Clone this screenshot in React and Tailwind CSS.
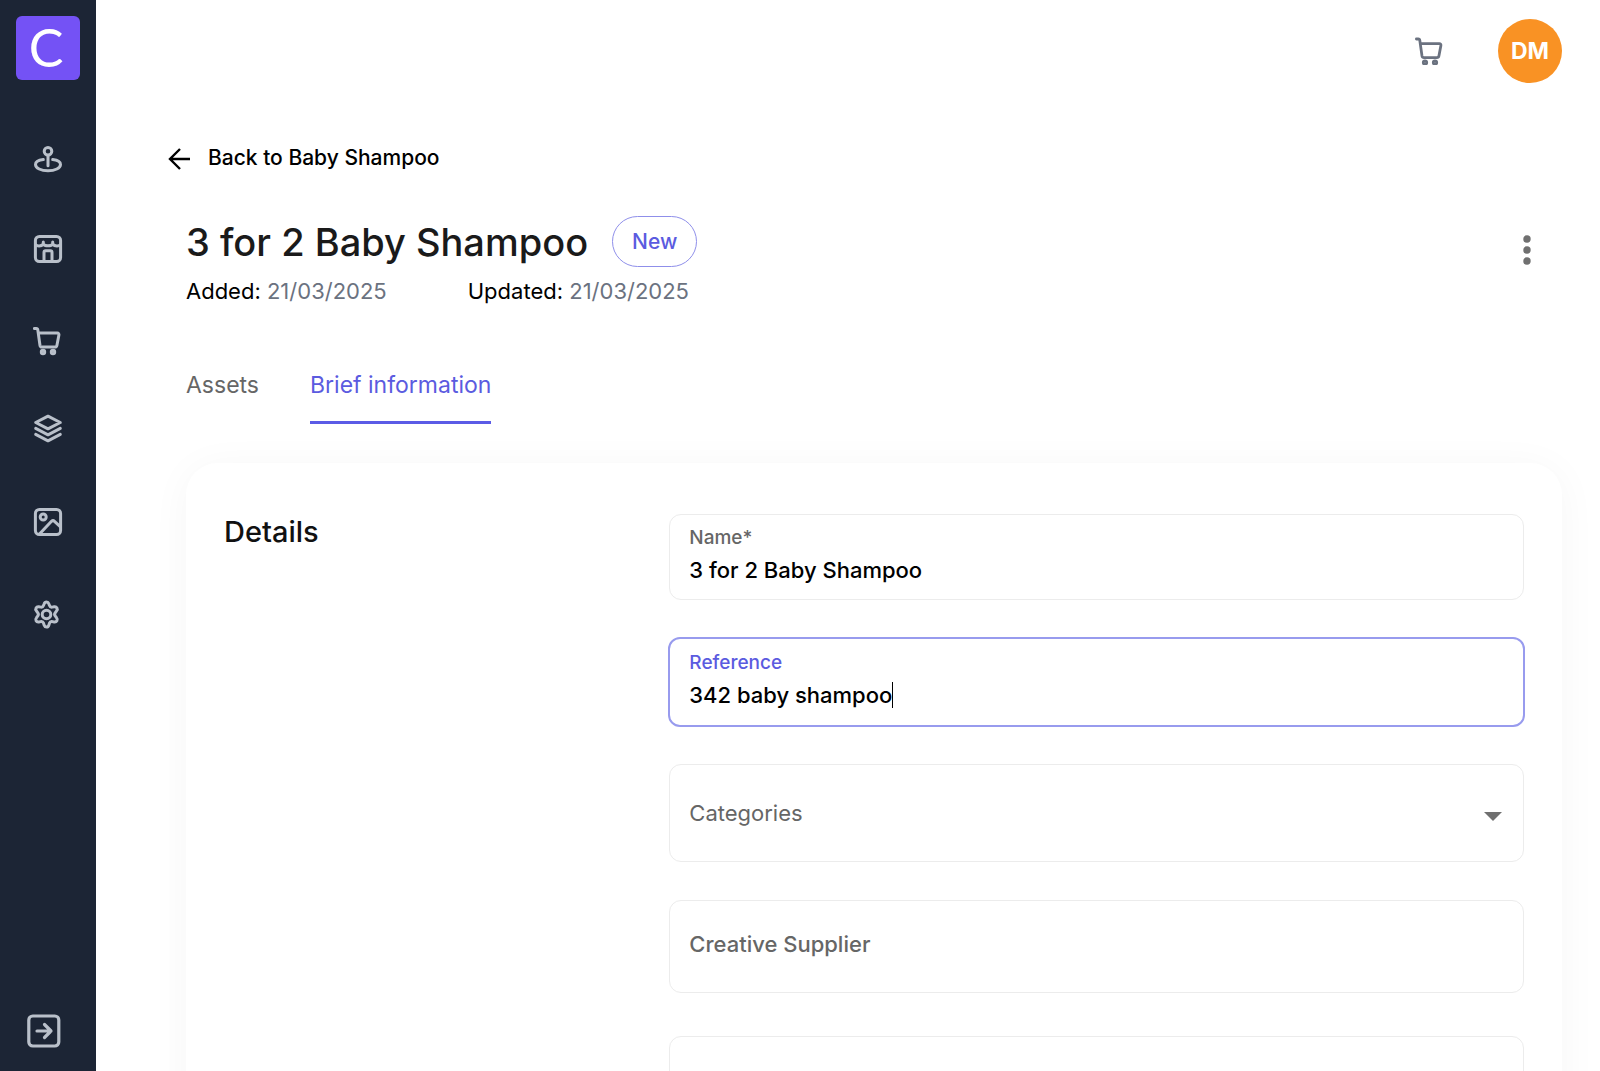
const navIcons = [
  {
    label: "Locations",
    viewBox: "-1 -5.5 30 40",
    shape: (
      <>
        <circle cx="14" cy="5.800" r="3.800" />
        <path d="M14 10v10.3M9.300 14.1C4.600 14.700 1.500 16.500 1.500 19c0 3.600 5.600 6.300 12.500 6.300s12.500-2.700 12.500-6.300c0-2.500-3.100-4.300-7.800-4.900" />
      </>
    ),
  },
  {
    label: "Stores",
    viewBox: "-1 -4 30 40",
    shape: (
      <>
        <rect x="1.400" y="1.400" width="25.200" height="25.200" rx="4" />
        <path d="M1.600 9.700c1.600 1.600 5.400 1.800 7.700-.6 1.400 2.300 8 2.300 9.400 0 2.300 2.400 6.100 2.200 7.700.6M9.300 9.100V7M18.700 9.100V7M10 26v-8.600a1.600 1.600 0 0 1 1.600-1.600h4.800a1.600 1.600 0 0 1 1.600 1.600V26" />
      </>
    ),
  },
  {
    label: "Orders",
    viewBox: "0 -4.500 30 40",
    shape: <CartShape />,
  },
  {
    label: "Collections",
    viewBox: "-1 -1.500 30 40",
    shape: (
      <path d="M14 1.700 26.300 8 14 14.300 1.700 8zM1.700 13.900 14 20.300l12.300-6.400M1.700 19.900 14 26.300l12.300-6.400" />
    ),
  },
  {
    label: "Media",
    viewBox: "-1 -4 30 40",
    shape: (
      <>
        <rect x="1.400" y="1.400" width="25.200" height="25.200" rx="4" />
        <circle cx="9.200" cy="9" r="3" />
        <path d="m5.500 26 12-12.700a2.200 2.200 0 0 1 3 0l6 5.500" />
      </>
    ),
  },
  {
    label: "Settings",
    viewBox: "0.500 -5.500 30 40",
    shape: (
      <>
        <circle cx="14" cy="14" r="4.300" />
        <path d="M11.700 3.200c.8-2.400 3.800-2.400 4.600 0l.7 1.900c.4 1.100 1.500 1.700 2.700 1.500l2-.4c2.500-.4 4 2.200 2.400 4.100l-1.300 1.900a2.600 2.600 0 0 0 0 3.300l1.300 1.900c1.600 1.900.1 4.500-2.400 4.100l-2-.4c-1.200-.2-2.300.4-2.700 1.500l-.7 2.200c-.8 2.400-3.800 2.400-4.600 0l-.7-2.200c-.4-1.100-1.500-1.700-2.700-1.500l-2 .4c-2.500.4-4-2.200-2.400-4.100l1.300-1.900a2.600 2.600 0 0 0 0-3.300l-1.300-1.900c-1.600-1.900-.1-4.500 2.400-4.100l2 .4c1.200.2 2.300-.4 2.700-1.500z" />
      </>
    ),
  },
];

function CartShape() {
  return (
    <>
      <path d="M1.400 2h1.800a1.600 1.600 0 0 1 1.600 1.400L7 19c.2 1 .9 1.600 1.900 1.600h13c1 0 1.800-.6 2-1.600l2-10.500c.2-1-.5-1.900-1.500-1.900H5.500" />
      <circle cx="10" cy="25.500" r="1.700" />
      <circle cx="20" cy="25.500" r="1.700" />
    </>
  );
}

const strokeProps = {
  fill: "none",
  stroke: "currentColor",
  strokeLinecap: "round",
  strokeLinejoin: "round",
};

function Sidebar() {
  return (
    <aside className="flex w-24 shrink-0 flex-col items-center bg-[#1c2535] text-[#b9c0ca]">
      <a
        href="#home"
        aria-label="Home"
        className="mt-4 flex size-16 items-center justify-center rounded-md bg-[#7452f5] pr-1 pb-0.5 font-['Lato',sans-serif] text-[52px] leading-none text-white"
      >
        C
      </a>
      <nav className="mt-15 flex flex-col gap-[51px]">
        {navIcons.map((item) => (
          <a key={item.label} href="#nav" aria-label={item.label} className="block">
            <svg width="30" height="40" viewBox={item.viewBox} strokeWidth="3" {...strokeProps}>
              {item.shape}
            </svg>
          </a>
        ))}
      </nav>
      <button type="button" aria-label="Expand menu" className="mt-auto mr-2 mb-5">
        <svg width="36" height="40" viewBox="0 0 36 40" strokeWidth="3.200" {...strokeProps}>
          <rect x="2.800" y="5" width="30" height="30" rx="4" />
          <path d="M11 20h14M18.500 13.500 25 20l-6.500 6.500" />
        </svg>
      </button>
    </aside>
  );
}

function Field({ id, label, value }) {
  return (
    <div className="flex h-[86px] flex-col rounded-xl border border-[#ececec] px-[19px] pt-[11px]">
      <label htmlFor={id} className="text-[19px] leading-6 font-medium text-[#666]">
        {label}
      </label>
      <input
        id={id}
        defaultValue={value}
        className="mt-1 h-8 w-full bg-transparent text-[22px] font-medium text-black outline-none"
      />
    </div>
  );
}

export default function App() {
  return (
    <div className="flex h-screen overflow-hidden bg-white font-['Inter',sans-serif] text-black">
      <Sidebar />
      <div className="flex min-w-0 flex-1 flex-col">
        <header className="flex h-[102px] shrink-0 items-center justify-end gap-[55px] pr-[38px]">
          <button type="button" aria-label="Cart" className="text-[#6b7280]">
            <svg width="28" height="28" viewBox="0 0 28 28" strokeWidth="2.800" {...strokeProps}>
              <CartShape />
            </svg>
          </button>
          <button
            type="button"
            className="size-16 rounded-full bg-[#f99224] text-[23px] font-bold text-white"
          >
            DM
          </button>
        </header>

        <main className="flex-1 pr-[38px] pl-[90px]">
          <a
            href="#back"
            className="mt-10 -ml-[18px] flex h-8 w-fit items-center gap-[17px] text-[21px] font-medium"
          >
            <svg width="23" height="22" viewBox="0 0 23 22" fill="none" stroke="currentColor" strokeWidth="2.400" className="mt-0.5">
              <path d="M22 11H2.500M12 1 2 11l10 10" />
            </svg>
            Back to Baby Shampoo
          </a>

          <div className="mt-[42px] flex items-start justify-between">
            <div>
              <div className="flex items-center gap-6">
                <h1 className="text-[38px] leading-[48px] font-medium text-[#1a1a1a]">
                  3 for 2 Baby Shampoo
                </h1>
                <span className="rounded-full border border-[#8f8fea] px-[19px] pt-[9px] pb-2 text-[21px] leading-8 font-medium text-[#5b5be0]">
                  New
                </span>
              </div>
              <div className="mt-2 flex gap-[81px] text-[22px] leading-8">
                <p>
                  Added: <span className="text-[#6b7280]">21/03/2025</span>
                </p>
                <p>
                  Updated: <span className="text-[#6b7280]">21/03/2025</span>
                </p>
              </div>
            </div>
            <button type="button" aria-label="More actions" className="mt-4 mr-[27px]">
              <svg width="16" height="36" viewBox="0 0 16 36" fill="#707070">
                <circle cx="8" cy="7" r="3.700" />
                <circle cx="8" cy="18" r="3.700" />
                <circle cx="8" cy="29" r="3.700" />
              </svg>
            </button>
          </div>

          <div role="tablist" className="mt-[62px] flex items-start gap-[51px] text-[23px] leading-8">
            <button type="button" role="tab" aria-selected="false" className="text-[#666]">
              Assets
            </button>
            <button
              type="button"
              role="tab"
              aria-selected="true"
              className="border-b-[3px] border-[#5b5be6] pb-5 text-[#5b5be0]"
            >
              Brief information
            </button>
          </div>

          <section className="mt-[39px] grid grid-cols-[1fr_2fr] gap-[18px] rounded-[32px] px-[38px] pt-[51px] shadow-[0_4px_40px_rgba(0,0,0,0.04)]">
            <h2 className="text-[29px] leading-9 font-medium text-[#111]">Details</h2>
            <form className="flex flex-col">
              <Field id="name" label="Name*" value="3 for 2 Baby Shampoo" />
              <div className="-mx-px mt-[37px] flex h-[90px] flex-col rounded-xl border-2 border-[#989bee] px-[19px] pt-3">
                <label htmlFor="reference" className="text-[19px] leading-6 font-medium text-[#5b5be0]">
                  Reference
                </label>
                <div className="mt-1 flex items-center">
                  <input
                    id="reference"
                    defaultValue="342 baby shampoo"
                    className="h-8 field-sizing-content bg-transparent text-[22px] font-medium caret-transparent outline-none"
                  />
                  <span className="h-[26px] w-px bg-black" />
                </div>
              </div>
              <div className="mt-[37px] grid h-[98px] items-center rounded-xl border border-[#ececec]">
                <select
                  id="categories"
                  aria-label="Categories"
                  className="col-start-1 row-start-1 h-full w-full appearance-none bg-transparent px-[19px] pt-px text-[22px] text-[#666] outline-none"
                >
                  <option>Categories</option>
                </select>
                <svg width="18" height="9" viewBox="0 0 18 9" fill="#707070" className="pointer-events-none col-start-1 row-start-1 mt-1.5 mr-[21px] justify-self-end">
                  <path d="M0 0h18L9 9z" />
                </svg>
              </div>
              <input
                aria-label="Creative Supplier"
                placeholder="Creative Supplier"
                className="mt-[38px] h-[93px] rounded-xl border border-[#ececec] px-[19px] pb-1.5 text-[22px] font-medium outline-none placeholder:text-[#666]"
              />
              <input
                aria-label="Additional information"
                className="mt-[43px] h-[93px] rounded-xl border border-[#ececec] px-[19px] text-[22px] outline-none"
              />
            </form>
          </section>
        </main>
      </div>
    </div>
  );
}
